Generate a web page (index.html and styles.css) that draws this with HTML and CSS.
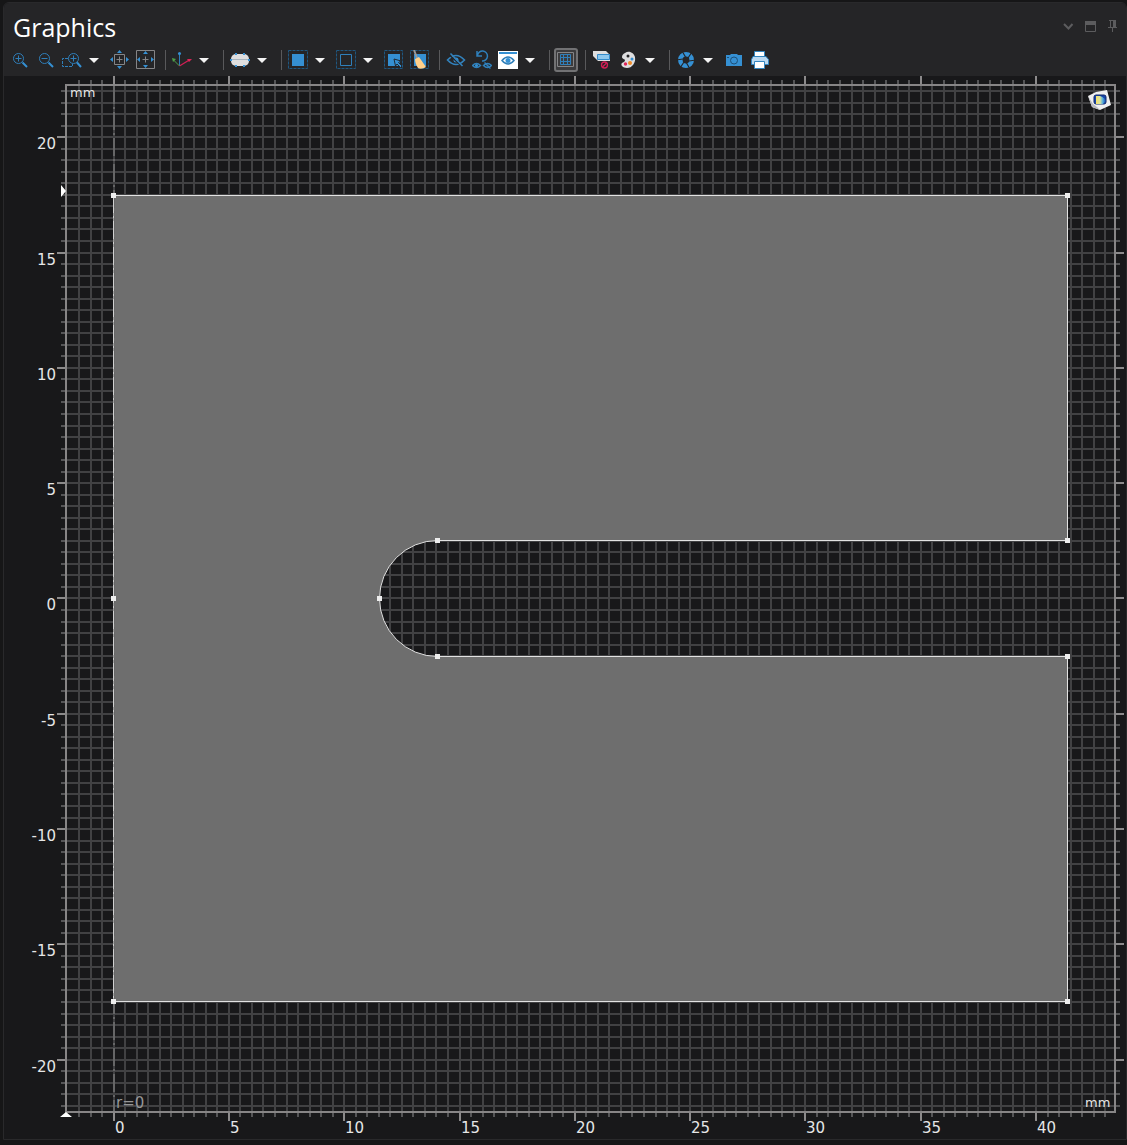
FILE: index.html
```html
<!DOCTYPE html>
<html lang="en">
<head>
<meta charset="utf-8">
<title>Graphics</title>
<link rel="stylesheet" href="styles.css">
</head>
<body>
<main class="panel">
  <header class="panel-head">
    <div class="title-row">
      <h1 class="title">Graphics</h1>
      <div class="window-tools">
        <button class="window-btn" aria-label="Collapse"><svg width="14" height="14" viewBox="0 0 14 14"><path d="M2 5l4.500 4.500L10.500 5" class="win-line"/></svg></button>
        <button class="window-btn" aria-label="Maximize"><svg width="14" height="14" viewBox="0 0 14 14"><path d="M1.500 2.500h10v10h-10z" class="win-line-thin"/><path d="M1 2h11v4H1z" class="win-fill"/></svg></button>
        <button class="window-btn" aria-label="Pin"><svg width="14" height="14" viewBox="0 0 14 14"><path d="M3 1.500h7M4.500 1.500v7M9.500 1.500v7M2 8.500h9M6.500 9v4" class="win-line-thin"/><path d="M7 2h2v6H7z" class="win-fill"/></svg></button>
      </div>
    </div>
    <div class="toolbar" role="toolbar" aria-label="Graphics tools">
      <button class="tool" aria-label="Zoom in"><svg class="icon" viewBox="0 0 20 20"><circle cx="8.500" cy="8.500" r="5" class="blue-line"/><path d="M5.500 8.500h6M8.500 5.500v6" class="blue-line"/><path d="M12.500 12.500l4.500 4.500" class="blue-thick"/></svg></button>
      <button class="tool" aria-label="Zoom out"><svg class="icon" viewBox="0 0 20 20"><circle cx="8.500" cy="8.500" r="5" class="blue-line"/><path d="M5.500 8.500h6" class="blue-line"/><path d="M12.500 12.500l4.500 4.500" class="blue-thick"/></svg></button>
      <button class="tool" aria-label="Zoom box"><svg class="icon" viewBox="0 0 20 20"><path d="M6 8.500H.5v8h10V14" class="blue-line dashed"/><circle cx="11.500" cy="8.500" r="5" class="blue-line"/><path d="M8.500 8.500h6M11.500 5.500v6" class="blue-line"/><path d="M15 12.500l4 4.500" class="blue-thick"/></svg></button>
      <button class="arrow" aria-label="Zoom options"></button>
      <button class="tool" aria-label="Zoom extents"><svg class="icon" viewBox="0 0 20 20"><path d="M4.500 4.500h10v10h-10zM9.500 6.500v6M6.500 9.500h6" class="gray-line"/><path d="M9.500 0L12 3H7zM9.500 19L12 16H7zM0 9.500L3 7v5zM19 9.500L16 7v5z" class="blue"/></svg></button>
      <button class="tool" aria-label="Zoom to selection"><svg class="icon" viewBox="0 0 20 20"><path d="M.5.5h18v18H.5zM9.500 6.500v6M6.500 9.500h6" class="gray-line"/><path d="M9.500 1L12 4H7zM9.500 18L12 15H7zM1 9.500L4 7v5zM18 9.500L15 7v5z" class="blue"/></svg></button>
      <span class="divider"></span>
      <button class="tool" aria-label="Go to view"><svg class="icon" viewBox="0 0 20 20"><path d="M7.500 16V4" class="blue-line"/><path d="M7.500 16L1.500 10" class="green-line"/><path d="M7.500 16L18 9.500" class="red-line"/><circle cx="7.500" cy="3.500" r="1.500" class="blue"/><path d="M0 8l4 1-3 3z" class="green"/><path d="M20 9l-3 3-2-3z" class="red"/></svg></button>
      <button class="arrow" aria-label="View options"></button>
      <span class="divider"></span>
      <button class="tool" aria-label="Clipping"><svg class="icon" viewBox="0 0 20 20"><rect x="1" y="4" width="18" height="12" rx="5" class="pale"/><path d="M2 9.500h16" class="soft-line"/><path d="M5 4h2M13 4h2M5 16h2M13 16h2" class="blue-thick"/><path d="M0 9h2v2H0zM18 9h2v2h-2z" class="blue"/></svg></button>
      <button class="arrow" aria-label="Clipping options"></button>
      <span class="divider"></span>
      <button class="tool" aria-label="Select domains"><svg class="icon" viewBox="0 0 20 20"><path d="M.5.500h19v18H.5z" class="dim-line dashed"/><path d="M4 4h12v12H4z" class="blue"/></svg></button>
      <button class="arrow" aria-label="Domain options"></button>
      <button class="tool" aria-label="Select boundaries"><svg class="icon" viewBox="0 0 20 20"><path d="M.5.500h19v18H.5z" class="dim-line dashed"/><path d="M4.500 4.500h11v11h-11z" class="blue-line"/></svg></button>
      <button class="arrow" aria-label="Boundary options"></button>
      <button class="tool" aria-label="Select box"><svg class="icon" viewBox="0 0 20 20"><path d="M.5.500h18v18H.5z" class="dim-line dashed"/><path d="M4 4h12v12H4z" class="blue"/><path d="M10 9l7 2-2.500 1.500L18 16l-1.500 1.500-3.500-3.500L11.500 16z" class="cursor"/></svg></button>
      <button class="tool" aria-label="Clear selection"><svg class="icon" viewBox="0 0 20 20"><path d="M.5.500h18v18H.5z" class="dim-line dashed"/><path d="M4 4h12v12H4z" class="blue"/><path d="M4 0l3 8" class="handle"/><path d="M5 9l4-2c3 4 4 6 7 10-3 2-6 2-8 1-2-3-3-6-3-9z" class="brush"/></svg></button>
      <span class="divider"></span>
      <button class="tool" aria-label="Hide objects"><svg class="icon" viewBox="0 0 20 20"><path d="M1.500 10q8.500-9 17 0q-8.500 9-17 0z" class="blue-eye"/><circle cx="10" cy="10" r="2.500" class="blue"/><path d="M3.500 5l13 12" class="cut"/><path d="M4.500 3.500l12 12.500" class="blue-eye"/></svg></button>
      <button class="tool" aria-label="Reset hiding"><svg class="icon" viewBox="0 0 20 20"><path d="M5 1v5h5M5.500 5.500a5 5 0 1 1 4.500 5.500" class="blue-line bolder"/><path d="M.5 15.500q4-4 8 0q-4 4-8 0zM11.500 15.500q4-4 8 0q-4 4-8 0zM12.500 12.500l6 6" class="blue-line bolder"/><circle cx="4.500" cy="15.500" r="1.500" class="blue"/></svg></button>
      <button class="tool" aria-label="View hidden"><svg class="icon" viewBox="0 0 20 20"><path d="M0 1h20v18H0z" class="white"/><path d="M1 2h18v2H1z" class="blue"/><path d="M4 10.500q6-7 12 0q-6 7-12 0z" class="blue-line bolder"/><circle cx="10" cy="10.500" r="2.500" class="blue"/></svg></button>
      <button class="arrow" aria-label="Visibility options"></button>
      <span class="divider"></span>
      <button class="tool pressed" aria-label="Show grid" aria-pressed="true"><svg class="icon" viewBox="0 0 20 20"><path d="M1.500 2.500h16v14h-16z" class="gray-line"/><path d="M4.500 4.500h10v10h-10zM7.500 5v10M11.500 5v10M5 7.500h10M5 11.500h10" class="blue-line"/></svg></button>
      <span class="divider"></span>
      <button class="tool" aria-label="Show labels"><svg class="icon" viewBox="0 0 20 20"><path d="M1 1h13l4 4v6H6L1 6z" class="pale"/><path d="M5.500 4.500h12v5h-12z" class="skyblock"/><circle cx="12.500" cy="15" r="3" class="red-line"/><path d="M10.500 17l4-4" class="red-line"/></svg></button>
      <button class="tool" aria-label="Color theme"><svg class="icon" viewBox="0 0 20 20"><path d="M7 3C11 0 16 3 17 7c1 6-3 11-8 11-4 0-7-3-5-5 1-1 3-1 3-3 0-1-3-1-3-3s1-3 3-4z" class="pale"/><circle cx="10" cy="6" r="1.500" class="ink"/><circle cx="14" cy="9" r="1.500" class="blue"/><circle cx="12" cy="13" r="2" class="orange"/><circle cx="7.500" cy="14" r="1.700" class="red"/></svg></button>
      <button class="arrow" aria-label="Theme options"></button>
      <span class="divider"></span>
      <button class="tool" aria-label="Scene"><svg class="icon" viewBox="0 0 20 20"><circle cx="10" cy="10" r="5.700" class="shutter"/><path d="M6 1l3.500 6M16 2l-4 6M20 10l-7 1M14 19l-3.500-6M4 18l4-6M0 10l7-1" class="slit"/></svg></button>
      <button class="arrow" aria-label="Scene options"></button>
      <button class="tool" aria-label="Snapshot"><svg class="icon" viewBox="0 0 20 20"><path d="M2 5h4l1-1h6l1 1h4v11H2z" class="blue"/><circle cx="10" cy="10.500" r="3.500" class="lens"/><path d="M3 7.500h2" class="lens"/></svg></button>
      <button class="tool" aria-label="Print"><svg class="icon" viewBox="0 0 20 20"><path d="M4.500 1.500h10V8h-10z" class="paper"/><path d="M3 6.500h13l2.500 3v5h-17v-5z" class="printer"/><path d="M4.500 11.500h10v7h-10z" class="paper"/></svg></button>
    </div>
  </header>
  <svg class="plot" id="plot" viewBox="4 76 1122 1063" role="img" aria-label="Cross section geometry, axes in mm">
    <path id="grid" class="grid"/>
    <path id="minor" class="minor"/>
    <path id="major" class="major"/>
    <path class="domain" d="M113.500 195.500H1067.500V540.500H437.500A58 58 0 0 0 437.500 656.500H1067.500V1001.500H113.500Z"/>
    <path class="axis" d="M114 86V1111"/>
    <path class="edge-base" d="M113.500 195V1002"/>
    <path class="outline" d="M113 195.500H1067.500V540.500H437.500A58 58 0 0 0 437.500 656.500H1067.500V1001.500H113"/>
    <path class="axis-edge" d="M113.500 195V1002"/>
    <rect class="frame" x="66" y="85" width="1049" height="1027"/>
    <g id="vertices" class="vertex"></g>
    <path class="marker" d="M61 185v12l5-6zM60 1117h12l-6-5z"/>
    <g id="labels" class="labels"></g>
    <text class="unit" x="70" y="97">mm</text>
    <text class="unit" x="1085" y="1107">mm</text>
    <text class="axis-name" x="116" y="1108">r=0</text>
    <defs>
      <linearGradient id="glow"><stop offset="0" stop-color="#f5df6b"/><stop offset=".4" stop-color="#d9e5a0"/><stop offset=".7" stop-color="#4aa6df"/><stop offset="1" stop-color="#103a9c"/></linearGradient>
    </defs>
    <path d="M1088 96l8-4 11-2 4 15-11 5-8-3z" class="logo-base"/>
    <path d="M1088 96l4 11 8 3-3-3-4-3z" class="logo-shade"/>
    <rect x="1094" y="95" width="12" height="9" rx="2" class="logo-screen"/>
    <path d="M1096 96h4q5 2 6 5l-3 3h-7z" fill="url(#glow)"/>
  </svg>
</main>
<script src="plot.js"></script>
</body>
</html>
```
FILE: styles.css
```css
* { box-sizing: border-box; }
body { margin: 0; background: #161617; font-family: "Open Sans", "Noto Sans", sans-serif; }
.panel { margin: 2px 0 5px 3px; border: 1px solid #29292b; border-radius: 6px 6px 0 0; background: #18181a; overflow: hidden; }
.panel-head { background: #252527; padding-bottom: 3px; }
.title-row { display: flex; justify-content: space-between; height: 44px; padding: 0 6px 0 9px; }
.title { margin: 0; padding-top: 6px; font-size: 25px; line-height: 36px; font-weight: 400; color: #fff; }
.window-tools { display: flex; gap: 8px; padding-top: 16px; }
.window-btn { width: 14px; height: 14px; padding: 0; border: 0; background: none; display: flex; }
.win-line { fill: none; stroke: #5c5c5e; stroke-width: 2; }
.win-line-thin { fill: none; stroke: #5c5c5e; }
.win-fill { fill: #5c5c5e; }

.toolbar { display: flex; height: 26px; padding-left: 3px; }
.tool { flex: none; display: flex; align-items: center; justify-content: center; width: 26px; height: 26px; padding: 0; border: 0; background: none; }
.icon { flex: none; width: 20px; height: 20px; }
.pressed { width: 24px; height: 24px; margin: 1px; border: 2px solid #727274; border-radius: 3px; background: #3b3b3d; }
.arrow { flex: none; width: 22px; padding: 0 4px 0 0; border: 0; background: none; display: flex; align-items: center; justify-content: center; }
.arrow::before { content: ""; border: solid transparent; border-width: 5px 5px 0; border-top-color: #f4f4f4; }
.divider { flex: none; width: 10px; padding: 3px 3px 3px 6px; background: #59595b content-box; }

.blue { fill: #3590d3; }
.blue-line { fill: none; stroke: #2f7fba; }
.bolder { stroke-width: 1.5; }
.blue-thick { fill: none; stroke: #3590d3; stroke-width: 2; }
.blue-eye { fill: none; stroke: #3282bd; stroke-width: 1.6; }
.cut { fill: none; stroke: #252527; stroke-width: 1.5; }
.dim-line { fill: none; stroke: #1f5780; }
.dashed { stroke-dasharray: 3 1; }
.gray-line { fill: none; stroke: #858587; }
.soft-line { fill: none; stroke: #a9b4bd; }
.green { fill: #4f9f48; }
.green-line { fill: none; stroke: #4f9f48; }
.red { fill: #df2458; }
.red-line { fill: none; stroke: #d31f55; stroke-width: 1.3; }
.pale { fill: #dededf; }
.white { fill: #fff; }
.ink { fill: #252527; }
.orange { fill: #f08a24; }
.skyblock { fill: #8ec8ef; stroke: #338bcb; }
.cursor { fill: #3590d3; stroke: #202a35; }
.handle { fill: none; stroke: #999; stroke-width: 2; }
.brush { fill: #ffd08a; }
.shutter { fill: none; stroke: #3590d3; stroke-width: 4.6; }
.slit { fill: none; stroke: #252527; stroke-width: 1.2; }
.lens { fill: none; stroke: #1d4f78; }
.paper { fill: #fff; stroke: #3285c0; }
.printer { fill: #b9d8f0; stroke: #3285c0; }

.plot { display: block; width: 100%; height: auto; font-family: "DejaVu Sans", sans-serif; }
.grid { fill: none; stroke: #414143; stroke-width: 2; }
.minor { fill: none; stroke: #555557; stroke-width: 2; }
.major { fill: none; stroke: #8c8a8b; stroke-width: 2; }
.frame { fill: none; stroke: #878586; stroke-width: 2; }
.domain { fill: #6e6e6e; }
.outline { fill: none; stroke: #e2e2e2; }
.axis { fill: none; stroke: #666667; stroke-width: 2; stroke-dasharray: 18 3 2 3; }
.edge-base { fill: none; stroke: #a2a2a2; }
.axis-edge { fill: none; stroke: #d0d0d0; stroke-dasharray: 18 3 2 3; }
.vertex { fill: #ededed; }
.marker { fill: #fff; }
.labels { fill: #e6e6e6; font-size: 15px; }
.label-y { text-anchor: end; }
.unit { fill: #e6e6e6; font-size: 13px; }
.axis-name { fill: #969697; font-size: 15px; }
.logo-base { fill: #efeff0; }
.logo-shade { fill: #b9bac0; }
.logo-screen { fill: #1746ad; stroke: #10296b; }
```
FILE: plot.js
```js
// Axis scale: drawing units per half millimetre, and the place of the origin.
const STEP = 11.53;
const xAt = k => Math.floor(114.1 + k * STEP);
const yAt = k => Math.floor(598.95 - k * STEP);
const svgNS = "http://www.w3.org/2000/svg";

let grid = "", minor = "", major = "";
const labels = document.getElementById("labels");

function label(text, x, y, cls) {
  const node = document.createElementNS(svgNS, "text");
  node.setAttribute("x", x);
  node.setAttribute("y", y);
  node.setAttribute("class", cls);
  node.textContent = text;
  labels.appendChild(node);
}

for (let k = -3; k <= 86; k++) {
  const x = xAt(k);
  grid += `M${x} 85V1112`;
  if (k % 10 === 0) {
    major += `M${x} 76V85M${x} 1112V1121`;
    label(k / 2, x + 1, 1133, "label-x");
  } else {
    minor += `M${x} 80V85M${x} 1112V1117`;
  }
}
for (let k = -44; k <= 44; k++) {
  const y = yAt(k);
  grid += `M66 ${y}H1115`;
  if (k % 10 === 0) {
    major += `M57 ${y}H66M1115 ${y}H1124`;
    label(k / 2, 56, y + 12, "label-y");
  } else {
    minor += `M61 ${y}H66M1115 ${y}H1120`;
  }
}
document.getElementById("grid").setAttribute("d", grid);
document.getElementById("minor").setAttribute("d", minor);
document.getElementById("major").setAttribute("d", major);

const points = [[113, 195], [1067, 195], [1067, 540], [437, 540], [379, 598],
  [437, 656], [1067, 656], [1067, 1001], [113, 1001], [113, 598]];
for (const [x, y] of points) {
  const dot = document.createElementNS(svgNS, "rect");
  dot.setAttribute("x", x - 2);
  dot.setAttribute("y", y - 2);
  dot.setAttribute("width", 5);
  dot.setAttribute("height", 5);
  document.getElementById("vertices").appendChild(dot);
}
```
